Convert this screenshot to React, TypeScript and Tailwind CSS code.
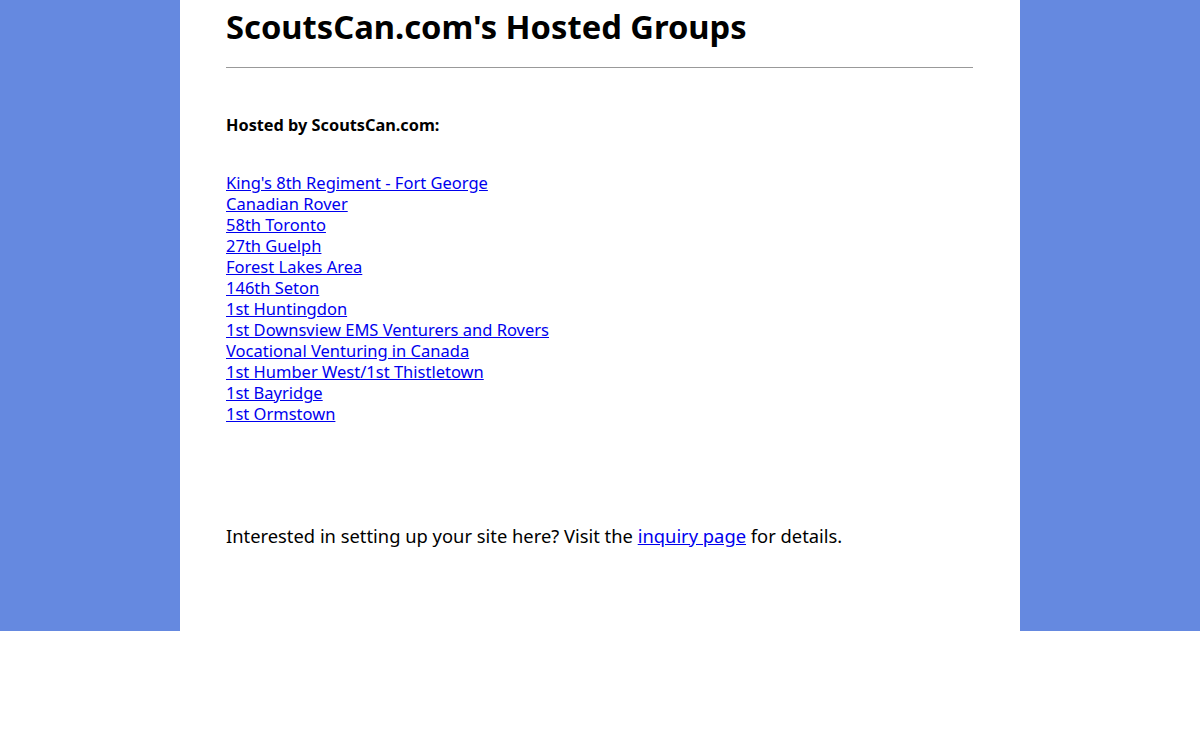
import React from "react";

const links = [
  "King's 8th Regiment - Fort George",
  "Canadian Rover",
  "58th Toronto",
  "27th Guelph",
  "Forest Lakes Area",
  "146th Seton",
  "1st Huntingdon",
  "1st Downsview EMS Venturers and Rovers",
  "Vocational Venturing in Canada",
  "1st Humber West/1st Thistletown",
  "1st Bayridge",
  "1st Ormstown",
];

export default function App() {
  return (
    <div className="min-h-[740px] bg-white text-black" style={{ fontFamily: '"Noto Sans", "Open Sans", sans-serif' }}>
      <div className="flex h-[631px]">
        <div className="w-[180px] bg-[#6589e0]" />
        <div className="w-[840px] bg-white px-[46px]">
          <h1 className="mt-[5px] text-[32.7px] font-bold leading-[44px]">ScoutsCan.com's Hosted Groups</h1>
          <hr className="mt-[18px] w-[747px] border-t border-[#999999]" />
          <p className="mt-[45px] text-[16.3px] font-bold leading-[24px]">Hosted by ScoutsCan.com:</p>
          <div className="mt-[35px] flex flex-col items-start">
            {links.map((l) => (
              <a key={l} href="#" className="text-[16.5px] leading-[21px] text-[#0000ee] underline">
                {l}
              </a>
            ))}
          </div>
          <p className="mt-[100px] text-[18.35px] leading-[24px]">
            Interested in setting up your site here? Visit the{" "}
            <a href="#" className="text-[#0000ee] underline">inquiry page</a> for details.
          </p>
        </div>
        <div className="w-[180px] bg-[#6589e0]" />
      </div>
    </div>
  );
}
